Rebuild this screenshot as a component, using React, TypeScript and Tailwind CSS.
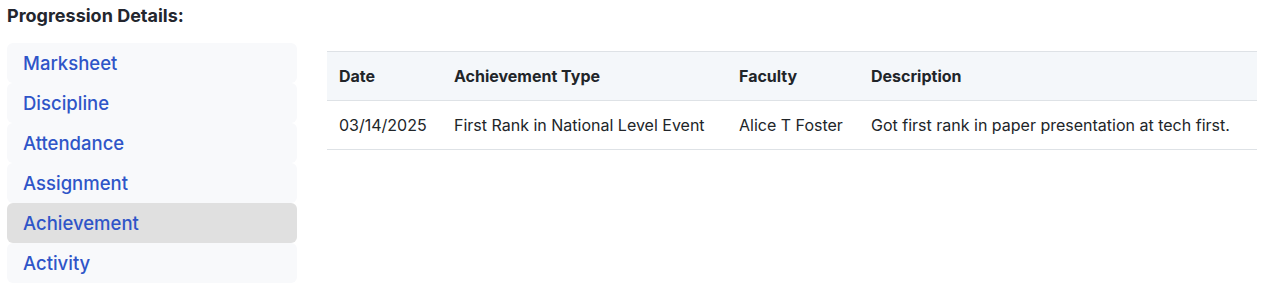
import React, { useState } from 'react';

const tabs = ['Marksheet', 'Discipline', 'Attendance', 'Assignment', 'Achievement', 'Activity'];

const rows = [
  {
    date: '03/14/2025',
    type: 'First Rank in National Level Event',
    faculty: 'Alice T Foster',
    description: 'Got first rank in paper presentation at tech first.',
  },
];

const App = () => {
  const [active, setActive] = useState('Achievement');

  return (
    <div className="bg-white text-[#212529] pl-[7px] pr-[15px] pt-[4px]" style={{ fontFamily: 'Inter, "Noto Sans", sans-serif' }}>
      <h2 className="text-[18px] font-bold leading-[24px] text-[#23262e]">Progression Details:</h2>

      <div className="flex gap-[30px] mt-[15px]">
        {/* Tabs */}
        <div className="w-[290px] flex-shrink-0 flex flex-col">
          {tabs.map(tab => (
            <button
              key={tab}
              onClick={() => setActive(tab)}
              className={`h-[40px] rounded-[6px] text-left pl-[16px] pt-[2px] text-[18.5px] font-medium text-[#2f55c8] ${
                active === tab ? 'bg-[#e0e0e0]' : 'bg-[#f8f9fb]'
              }`}
            >
              {tab}
            </button>
          ))}
        </div>

        {/* Table */}
        <div className="flex-1 mt-[8px]">
          <table className="w-full border-collapse text-[16px] table-fixed">
            <thead>
              <tr className="bg-[#f4f7fa] border-t border-b border-[#dee2e6]">
                <th className="w-[115px] h-[49px] px-3 text-left font-bold">Date</th>
                <th className="w-[285px] px-3 text-left font-bold">Achievement Type</th>
                <th className="w-[132px] px-3 text-left font-bold">Faculty</th>
                <th className="px-3 text-left font-bold">Description</th>
              </tr>
            </thead>
            <tbody>
              {rows.map((r, i) => (
                <tr key={i} className="border-b border-[#dee2e6]">
                  <td className="h-[49px] px-3">{r.date}</td>
                  <td className="px-3">{r.type}</td>
                  <td className="px-3">{r.faculty}</td>
                  <td className="px-3">{r.description}</td>
                </tr>
              ))}
            </tbody>
          </table>
        </div>
      </div>
    </div>
  );
};

export default App;
